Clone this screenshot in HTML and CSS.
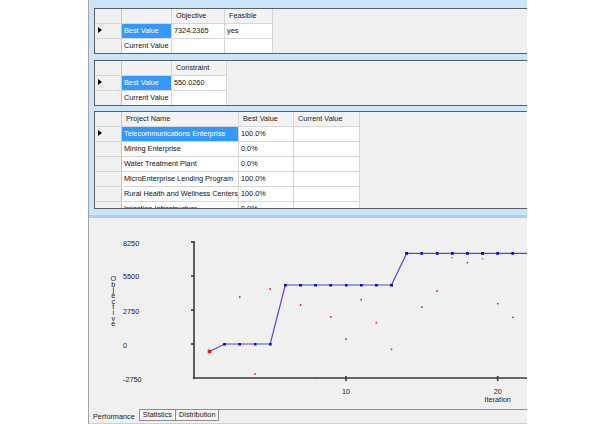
FILE: index.html
```html
<!DOCTYPE html>
<html lang="en">
<head>
    <meta charset="UTF-8">
    <title>Optimization Results</title>
    <link rel="stylesheet" href="styles.css">
</head>
<body>

<div class="app">
    <div class="top-pane">
        <!-- objective grid -->
        <div class="panel">
            <div class="row head">
                <div class="cell rowhead"></div>
                <div class="cell c-name"></div>
                <div class="cell c-obj">Objective</div>
                <div class="cell c-feas">Feasible</div>
            </div>
            <div class="row">
                <div class="cell rowhead"><span class="arrow"></span></div>
                <div class="cell c-name selected">Best Value</div>
                <div class="cell c-obj">7324.2365</div>
                <div class="cell c-feas">yes</div>
            </div>
            <div class="row">
                <div class="cell rowhead"></div>
                <div class="cell c-name">Current Value</div>
                <div class="cell c-obj"></div>
                <div class="cell c-feas"></div>
            </div>
        </div>

        <!-- constraint grid -->
        <div class="panel">
            <div class="row head">
                <div class="cell rowhead"></div>
                <div class="cell c-name"></div>
                <div class="cell c-cons">Constraint</div>
            </div>
            <div class="row">
                <div class="cell rowhead"><span class="arrow"></span></div>
                <div class="cell c-name selected">Best Value</div>
                <div class="cell c-cons">550.0260</div>
            </div>
            <div class="row">
                <div class="cell rowhead"></div>
                <div class="cell c-name">Current Value</div>
                <div class="cell c-cons"></div>
            </div>
        </div>

        <!-- decision variables -->
        <div class="panel panel-tall">
            <div class="row head">
                <div class="cell rowhead"></div>
                <div class="cell c-proj">Project Name</div>
                <div class="cell c-best">Best Value</div>
                <div class="cell c-cur">Current Value</div>
            </div>
            <div class="row">
                <div class="cell rowhead"><span class="arrow"></span></div>
                <div class="cell c-proj selected">Telecommunications Enterprise</div>
                <div class="cell c-best">100.0%</div>
                <div class="cell c-cur"></div>
            </div>
            <div class="row">
                <div class="cell rowhead"></div>
                <div class="cell c-proj">Mining Enterprise</div>
                <div class="cell c-best">0.0%</div>
                <div class="cell c-cur"></div>
            </div>
            <div class="row">
                <div class="cell rowhead"></div>
                <div class="cell c-proj">Water Treatment Plant</div>
                <div class="cell c-best">0.0%</div>
                <div class="cell c-cur"></div>
            </div>
            <div class="row">
                <div class="cell rowhead"></div>
                <div class="cell c-proj">MicroEnterprise Lending Program</div>
                <div class="cell c-best">100.0%</div>
                <div class="cell c-cur"></div>
            </div>
            <div class="row">
                <div class="cell rowhead"></div>
                <div class="cell c-proj">Rural Health and Wellness Centers</div>
                <div class="cell c-best">100.0%</div>
                <div class="cell c-cur"></div>
            </div>
            <div class="row">
                <div class="cell rowhead"></div>
                <div class="cell c-proj">Irrigation Infrastructure</div>
                <div class="cell c-best">0.0%</div>
                <div class="cell c-cur"></div>
            </div>
        </div>
    </div>

    <div class="splitter"></div>

    <div class="chart-pane">
        <svg class="chart" width="438" height="191" viewBox="89 218 438 191">
            <defs>
                <marker id="sq" markerWidth="3" markerHeight="3" refX="1.5" refY="1.5" markerUnits="userSpaceOnUse">
                    <rect width="3" height="3" fill="#0c0cd0"/>
                </marker>
            </defs>

            <!-- axes -->
            <g class="axis">
                <line x1="194" y1="241" x2="194" y2="379"/>
                <line x1="193" y1="378" x2="530" y2="378"/>
                <line x1="191" y1="242" x2="194" y2="242"/>
                <line x1="191" y1="276" x2="194" y2="276"/>
                <line x1="191" y1="310" x2="194" y2="310"/>
                <line x1="191" y1="344" x2="194" y2="344"/>
                <line x1="346" y1="376" x2="346" y2="381"/>
                <line x1="497.7" y1="376" x2="497.7" y2="381"/>
            </g>

            <g class="labels">
                <text x="123" y="246">8250</text>
                <text x="123" y="279">5500</text>
                <text x="123" y="314">2750</text>
                <text x="123" y="348">0</text>
                <text x="123" y="382">-2750</text>
                <text x="346" y="394" text-anchor="middle">10</text>
                <text x="497.7" y="394" text-anchor="middle">20</text>
                <text x="497.7" y="402" text-anchor="middle">Iteration</text>
                <text class="y-title" x="113.3" y="274">Objective</text>
            </g>

            <!-- trial solutions -->
            <g class="trials">
                <circle cx="239.8" cy="297" r="0.9"/>
                <circle cx="255" cy="374" r="0.9"/>
                <circle cx="270.2" cy="289" r="0.9"/>
                <circle cx="300.5" cy="305" r="0.9"/>
                <circle cx="315.7" cy="378" r="0.9"/>
                <circle cx="330.8" cy="317" r="0.9"/>
                <circle cx="346" cy="339" r="0.9"/>
                <circle cx="361.2" cy="299.7" r="0.9"/>
                <circle cx="376.3" cy="322.7" r="0.9"/>
                <circle cx="391.5" cy="349.3" r="0.9"/>
                <circle cx="421.9" cy="307" r="0.9"/>
                <circle cx="437" cy="291" r="0.9"/>
                <circle cx="467.4" cy="262.7" r="0.9"/>
                <circle cx="497.7" cy="303.7" r="0.9"/>
                <circle cx="512.9" cy="317.3" r="0.9"/>
                <circle class="gray" cx="452.2" cy="257.7" r="0.9"/>
                <circle class="gray" cx="482.5" cy="258.7" r="0.9"/>
            </g>

            <!-- best so far -->
            <polyline class="best" points="209.5,351.5 224.6,344 239.8,344 255,344 270.2,344 285.3,285 300.5,285 315.7,285 330.8,285 346,285 361.2,285 376.3,285 391.5,285 406.7,253.3 421.9,253.3 437,253.3 452.2,253.3 467.4,253.3 482.5,253.3 497.7,253.3 512.9,253.3 528,253.3"/>
            <rect x="207.7" y="349.7" width="3.6" height="3.6" fill="#e01c1c"/>
        </svg>
    </div>

    <div class="tabs">
        <div class="tab active">Performance</div>
        <div class="tab">Statistics</div>
        <div class="tab">Distribution</div>
        <div class="tab-fill"></div>
    </div>
</div>

</body>
</html>
```

FILE: styles.css
```css
html, body {
    margin: 0;
    padding: 0;
    height: 424px;
    overflow: hidden;
    background: #fff;
}
body {
    font-family: "Liberation Sans", Arial, sans-serif;
    font-size: 7.3px;
    color: #111;
}
.app {
    margin-left: 88px;
    width: 439px;
    height: 424px;
    box-sizing: border-box;
    border-left: 1px solid #a3a3a3;
    display: flex;
    flex-direction: column;
    overflow: hidden;
}
.top-pane {
    height: 215px;
    flex-shrink: 0;
    box-sizing: border-box;
    padding: 8px 0 0 5px;
    background: #cbe5f8;
    display: flex;
    flex-direction: column;
    gap: 6px;
    overflow: hidden;
}
.panel {
    width: 470px;
    height: 44px;
    flex-shrink: 0;
    border: 1px solid #5e5e5e;
    background: #f0f0f0;
    overflow: hidden;
}
.panel-tall {
    height: 96px;
    margin-top: -1px;
}
.row {
    display: flex;
    height: 15px;
}
.cell {
    box-sizing: border-box;
    height: 15px;
    line-height: 14px;
    padding-left: 2px;
    border-right: 1px solid #d6d6d6;
    border-bottom: 1px solid #d6d6d6;
    background: #fff;
    white-space: nowrap;
    overflow: hidden;
    flex-shrink: 0;
}
.head .cell {
    background: #f3f3f3;
    padding-left: 4px;
    color: #1c1c1c;
}
.cell.rowhead {
    width: 27px;
    padding: 0;
    background: #f0f0f0;
    border-right-color: #c4c4c4;
}
.cell.selected {
    background: #3399ff;
    color: #fff;
}
.arrow {
    display: block;
    width: 0;
    height: 0;
    margin: 3px 0 0 3px;
    border-left: 4px solid #000;
    border-top: 3px solid transparent;
    border-bottom: 3px solid transparent;
}
.c-name { width: 50px; }
.c-obj { width: 53px; }
.c-feas { width: 48px; }
.c-cons { width: 55px; }
.c-proj { width: 117px; }
.c-best { width: 55px; }
.c-cur { width: 66px; }

.splitter {
    height: 3px;
    flex-shrink: 0;
    background: #b6cae4;
}
.chart-pane {
    height: 191px;
    flex-shrink: 0;
    background: #f0f0f0;
}
.chart {
    display: block;
}
.axis line {
    stroke: #3a3a3a;
    stroke-width: 1.6;
}
.labels text {
    font-family: "Liberation Sans", Arial, sans-serif;
    font-size: 7.3px;
    fill: #222;
}
.labels .y-title {
    writing-mode: vertical-lr;
    text-orientation: upright;
    letter-spacing: -3.35px;
}
.trials circle {
    fill: #d42a2a;
}
.trials circle.gray {
    fill: #8a8a8a;
}
.best {
    fill: none;
    stroke: #4b4bcf;
    stroke-width: 1.2;
    marker-start: url(#sq);
    marker-mid: url(#sq);
    marker-end: url(#sq);
}

.tabs {
    height: 15px;
    flex-shrink: 0;
    box-sizing: border-box;
    display: flex;
    align-items: flex-start;
    background: #f0f0f0;
    border-bottom: 1px solid #cfcfcf;
}
.tab {
    box-sizing: border-box;
    height: 12px;
    line-height: 10px;
    padding: 0 3px;
    border: 1px solid #8e8e8e;
    border-left: none;
    background: #f4f4f4;
    color: #222;
}
.tab.active {
    height: 14px;
    line-height: 15px;
    padding: 0 4px;
    border: none;
    background: #f0f0f0;
}
.tab:nth-child(2) {
    border-left: 1px solid #8e8e8e;
}
.tab-fill {
    flex: 1;
    border-top: 1px solid #8e8e8e;
}
```
